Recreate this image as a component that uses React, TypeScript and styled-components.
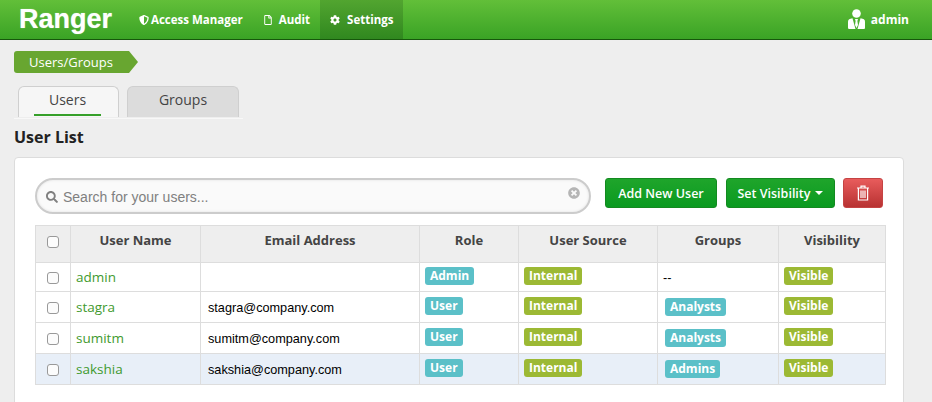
import { createGlobalStyle, styled } from "styled-components";
import { FaCog, FaRegFile, FaSearch, FaShieldAlt, FaTimesCircle } from "react-icons/fa";

const GlobalStyle = createGlobalStyle`
  html, body {
    margin: 0;
    height: 402px;
    overflow: hidden;
    background: #eeeeee;
    font-family: "Open Sans", sans-serif;
  }
`;

const Navbar = styled.header`
  display: flex;
  align-items: stretch;
  height: 39px;
  padding-left: 19px;
  background: linear-gradient(to bottom, #62bf39, #3aa325);
  border-bottom: 1px solid #17570c;
`;

const Brand = styled.div`
  width: 110px;
  font: bold 27px/38px "Liberation Sans", sans-serif;
  color: #fff;
  text-shadow: 0 0 1px rgba(255, 255, 255, 0.6);
`;

const NavItem = styled.a<{ $active?: boolean; $gap: number }>`
  display: flex;
  align-items: center;
  gap: ${(p) => p.$gap}px;
  padding: 0 10px;
  font-size: 11.5px;
  font-weight: 700;
  color: #fff;
  background: ${(p) => (p.$active ? "linear-gradient(to bottom, #52a530, #30881f)" : "none")};

  svg {
    font-size: 10px;
  }
`;

const UserMenu = styled.div`
  display: flex;
  align-items: center;
  gap: 6px;
  margin-left: auto;
  padding-right: 23px;
  font-size: 12px;
  font-weight: 700;
  color: #fff;
`;

const Main = styled.main`
  padding: 11px 28px 0 14px;
`;

const Breadcrumb = styled.div`
  width: 124px;
  height: 22px;
  box-sizing: border-box;
  padding-left: 15px;
  font-size: 13px;
  line-height: 22px;
  color: #fff;
  background: #68a630;
  border-radius: 3px 0 0 3px;
  clip-path: polygon(0 0, 115px 0, 100% 50%, 115px 100%, 0 100%);
`;

const Tabs = styled.nav`
  display: flex;
  gap: 8px;
  width: 225px;
  height: 32px;
  margin-top: 13px;
  padding-left: 4px;
  border-bottom: 1px solid #f8f8f8;
`;

const Tab = styled.div<{ $active?: boolean; $width: number }>`
  position: relative;
  box-sizing: border-box;
  width: ${(p) => p.$width}px;
  height: 31px;
  padding: 3px ${(p) => (p.$active ? 2 : 0)}px 0 0;
  font-size: 14px;
  line-height: 20px;
  text-align: center;
  color: #444;
  background: ${(p) => (p.$active ? "#f6f6f6" : "#dcdcdc")};
  border: 1px solid #cfcfcf;
  border-bottom: none;
  border-radius: 6px 6px 0 0;

  &::after {
    content: "";
    display: ${(p) => (p.$active ? "block" : "none")};
    position: absolute;
    left: 15px;
    right: 17px;
    bottom: 1px;
    height: 2px;
    background: #36a02a;
  }
`;

const Heading = styled.h2`
  margin: 7px 0 0;
  font-size: 16px;
  font-weight: 700;
  line-height: 22px;
  color: #222;
`;

const Panel = styled.section`
  height: 300px;
  margin-top: 9px;
  padding: 20px;
  background: #fff;
  border: 1px solid #dcdcdc;
  border-radius: 4px;
`;

const Toolbar = styled.div`
  display: flex;
  align-items: flex-start;
  height: 36px;
  margin-bottom: 11px;
`;

const SearchBox = styled.div`
  display: flex;
  align-items: center;
  flex: none;
  box-sizing: border-box;
  width: 556px;
  height: 36px;
  margin-right: 14px;
  padding: 2px 9px 0;
  background: #fafafa;
  border: 2px solid #cccccc;
  border-radius: 18px;
  box-shadow: inset 0 0 3px rgba(0, 0, 0, 0.1);
`;

const SearchText = styled.span`
  flex: 1;
  margin-left: 5px;
  font: 14px "Liberation Sans", sans-serif;
  color: #808080;
`;

const ClearIcon = styled(FaTimesCircle)`
  margin-top: -8px;
  color: #b5b5b5;
`;

const Button = styled.button<{ $width: number; $danger?: boolean; $after?: number }>`
  display: flex;
  align-items: center;
  justify-content: center;
  flex: none;
  gap: 5px;
  width: ${(p) => p.$width}px;
  height: 30px;
  margin-right: ${(p) => p.$after ?? 0}px;
  padding: 0;
  font: 600 12.5px "Open Sans", sans-serif;
  color: #fff;
  background: ${(p) =>
    p.$danger
      ? "linear-gradient(to bottom, #e85c5c, #b83232)"
      : "linear-gradient(to bottom, #1fa52b, #0a9a20)"};
  border: 1px solid ${(p) => (p.$danger ? "#c54343" : "#138a20")};
  border-radius: 3px;
`;

const Caret = styled.span`
  width: 0;
  height: 0;
  border-top: 4px solid #fff;
  border-left: 4px solid transparent;
  border-right: 4px solid transparent;
`;

const Table = styled.table`
  width: 851px;
  table-layout: fixed;
  border-collapse: collapse;
  border: 1px solid #dddddd;
`;

const Th = styled.th<{ $width: number }>`
  box-sizing: border-box;
  width: ${(p) => p.$width}px;
  height: 37px;
  padding: 0 0 9px;
  font-size: 13px;
  font-weight: 700;
  text-align: center;
  color: #444;
  background: #eeeeee;
  border: 1px solid #dddddd;
`;

const Row = styled.tr<{ $selected?: boolean; $height: number }>`
  height: ${(p) => p.$height}px;
  background: ${(p) => (p.$selected ? "#e8eff8" : "#fff")};
`;

const Td = styled.td<{ $pad?: number; $lift?: number }>`
  padding: 0 0 ${(p) => p.$lift ?? 2}px ${(p) => p.$pad ?? 5}px;
  border: 1px solid #dddddd;
`;

const NameLink = styled.a`
  font-size: 13.5px;
  color: #3f9a2e;
`;

const Email = styled.span`
  font: 12.7px "Liberation Sans", sans-serif;
  color: #000;
`;

const Badge = styled.span<{ $tone: "teal" | "olive" }>`
  display: inline-block;
  height: 18px;
  padding: 0 5px;
  font-size: 12px;
  font-weight: 700;
  line-height: 17px;
  vertical-align: middle;
  color: #fff;
  background: ${(p) => (p.$tone === "teal" ? "#5bc0c8" : "#9cb934")};
  border-radius: 3px;
`;

const Check = styled.input.attrs({ type: "checkbox" })`
  appearance: none;
  display: block;
  width: 12px;
  height: 12px;
  margin: 2px auto 0;
  background: #fcfcfc;
  border: 1px solid #999;
  border-radius: 3px;
`;

const HeaderCheck = styled(Check)`
  margin-top: 4px;
`;

function TrashIcon() {
  return (
    <svg width="14" height="16" viewBox="0 0 14 16" fill="none" stroke="#fff" strokeWidth="1.2">
      <path d="M1 3h12M5 3V1.2h4V3M2.4 3v12h9.2V3" />
      <path d="M5 5.5v7.5M7 5.5v7.5M9 5.5v7.5" />
    </svg>
  );
}

function AdminIcon() {
  return (
    <svg width="17" height="21" viewBox="0 0 17 21" fill="#fff">
      <circle cx="8.5" cy="4.5" r="4.3" />
      <path d="M0 12.5C0 10.5 1.5 9.8 4.5 9.2L7.5 20H1.5C.5 20 0 19.5 0 18.5Z" />
      <path d="M17 12.5C17 10.5 15.5 9.8 12.5 9.2L9.5 20H15.5C16.5 20 17 19.5 17 18.5Z" />
      <path d="M7 10h3l-.6 2 .6 4-1.5 3-1.5-3 .6-4Z" />
    </svg>
  );
}

type User = {
  name: string;
  email: string;
  role: string;
  group: string;
  height: number;
  selected?: boolean;
};

const users: User[] = [
  { name: "admin", email: "", role: "Admin", group: "", height: 29 },
  { name: "stagra", email: "stagra@company.com", role: "User", group: "Analysts", height: 31 },
  { name: "sumitm", email: "sumitm@company.com", role: "User", group: "Analysts", height: 31 },
  { name: "sakshia", email: "sakshia@company.com", role: "User", group: "Admins", height: 31, selected: true },
];

export default function App() {
  return (
    <>
      <GlobalStyle />
      <Navbar>
        <Brand>Ranger</Brand>
        <NavItem $gap={2}>
          <FaShieldAlt />
          Access Manager
        </NavItem>
        <NavItem $gap={6}>
          <FaRegFile />
          Audit
        </NavItem>
        <NavItem $active $gap={7}>
          <FaCog />
          Settings
        </NavItem>
        <UserMenu>
          <AdminIcon />
          admin
        </UserMenu>
      </Navbar>
      <Main>
        <Breadcrumb>Users/Groups</Breadcrumb>
        <Tabs>
          <Tab $active $width={101}>Users</Tab>
          <Tab $width={112}>Groups</Tab>
        </Tabs>
        <Heading>User List</Heading>
        <Panel>
          <Toolbar>
            <SearchBox>
              <FaSearch color="#808080" size={12} />
              <SearchText>Search for your users...</SearchText>
              <ClearIcon size={12} />
            </SearchBox>
            <Button $width={112} $after={9}>Add New User</Button>
            <Button $width={109} $after={8}>
              Set Visibility <Caret />
            </Button>
            <Button $width={40} $danger>
              <TrashIcon />
            </Button>
          </Toolbar>
          <Table>
            <thead>
              <tr>
                <Th $width={35}><HeaderCheck /></Th>
                <Th $width={130}>User Name</Th>
                <Th $width={219}>Email Address</Th>
                <Th $width={99}>Role</Th>
                <Th $width={139}>User Source</Th>
                <Th $width={121}>Groups</Th>
                <Th $width={107}>Visibility</Th>
              </tr>
            </thead>
            <tbody>
              {users.map((u) => (
                <Row key={u.name} $selected={u.selected} $height={u.height}>
                  <Td $pad={0} $lift={0}><Check /></Td>
                  <Td><NameLink>{u.name}</NameLink></Td>
                  <Td $pad={7}><Email>{u.email}</Email></Td>
                  <Td $lift={6}><Badge $tone="teal">{u.role}</Badge></Td>
                  <Td $lift={6}><Badge $tone="olive">Internal</Badge></Td>
                  {u.group ? (
                    <Td $pad={7} $lift={4}><Badge $tone="teal">{u.group}</Badge></Td>
                  ) : (
                    <Td $pad={5}><Email>--</Email></Td>
                  )}
                  <Td $lift={6}><Badge $tone="olive">Visible</Badge></Td>
                </Row>
              ))}
            </tbody>
          </Table>
        </Panel>
      </Main>
    </>
  );
}
